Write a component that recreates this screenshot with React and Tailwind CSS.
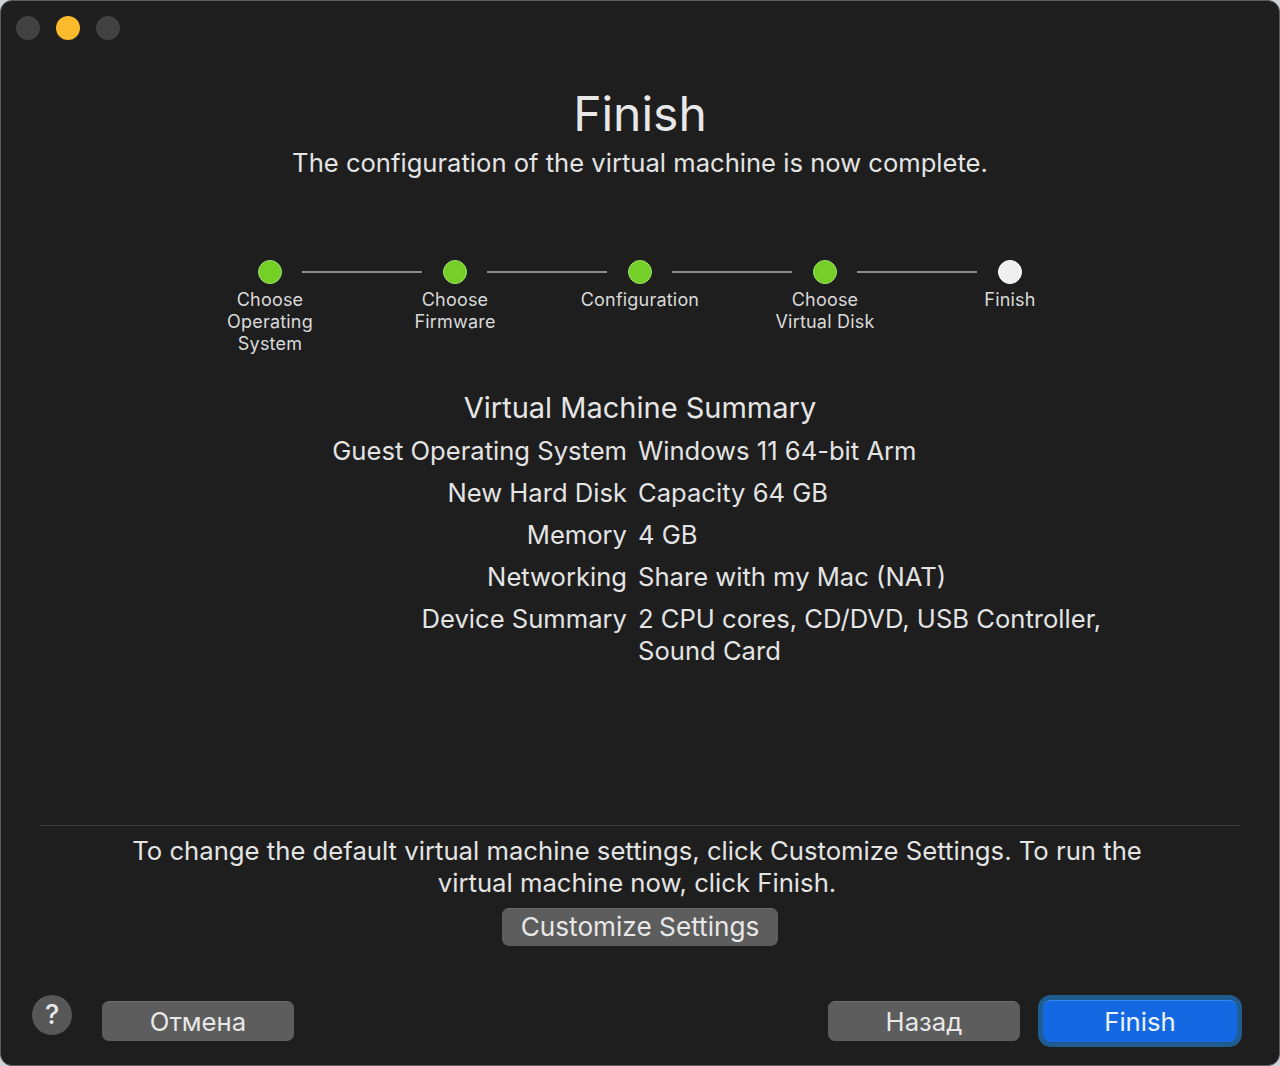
import React from 'react';

const steps = [
  { label: ['Choose', 'Operating', 'System'], done: true },
  { label: ['Choose', 'Firmware'], done: true },
  { label: ['Configuration'], done: true },
  { label: ['Choose', 'Virtual Disk'], done: true },
  { label: ['Finish'], done: false },
];

const summary = [
  ['Guest Operating System', 'Windows 11 64-bit Arm'],
  ['New Hard Disk', 'Capacity 64 GB'],
  ['Memory', '4 GB'],
  ['Networking', 'Share with my Mac (NAT)'],
  ['Device Summary', '2 CPU cores, CD/DVD, USB Controller, Sound Card'],
];

function Stepper() {
  return (
    <div className="flex flex-col items-center">
      <div className="flex items-center">
        {steps.map((step, i) => (
          <React.Fragment key={i}>
            <div
              className={
                step.done
                  ? 'w-6 h-6 rounded-full bg-[#74cf27] border border-[#a2dd72]'
                  : 'w-6 h-6 rounded-full bg-[#efefef] border border-[#ffffff]'
              }
            />
            {i < steps.length - 1 && (
              <div className="ml-5 mr-[21px] w-[120px] h-[2px] bg-[#8a8a8a]" />
            )}
          </React.Fragment>
        ))}
      </div>
      <div className="flex mt-[5px]">
        {steps.map((step, i) => (
          <div
            key={i}
            className="w-[185px] text-center text-[18px] leading-[22px] text-[#dadada] tracking-[0.2px]"
          >
            {step.label.map((line) => (
              <div key={line}>{line}</div>
            ))}
          </div>
        ))}
      </div>
    </div>
  );
}

function GrayButton({ children, className = '' }) {
  return (
    <button
      className={`h-10 rounded-[7px] bg-[#5d5d5d] border-t border-[#6a6a6a] text-[25.7px] text-[#e8e8e8] leading-none ${className}`}
    >
      {children}
    </button>
  );
}

export default function App() {
  return (
    <div className="w-[1280px] h-[1066px] bg-[#cfd3d8] font-['Inter','Liberation_Sans',sans-serif]">
      <div className="relative w-full h-full rounded-[12px] bg-[#1e1e1e] border border-[#5a5a5a] flex flex-col overflow-hidden">
        {/* traffic lights */}
        <div className="absolute top-[15px] left-[15px] flex gap-4">
          <div className="w-6 h-6 rounded-full bg-[#424242]" />
          <div className="w-6 h-6 rounded-full bg-[#fcbb2d]" />
          <div className="w-6 h-6 rounded-full bg-[#424242]" />
        </div>

        <h1 className="mt-[87px] text-center text-[48px] leading-[52px] text-[#e8e8e8]">
          Finish
        </h1>
        <p className="mt-[8px] text-center text-[25.6px] leading-[30px] text-[#e4e4e4]">
          The configuration of the virtual machine is now complete.
        </p>

        <div className="mt-[82px]">
          <Stepper />
        </div>

        <h2 className="mt-[36px] text-center text-[29px] leading-[34px] text-[#e6e6e6]">
          Virtual Machine Summary
        </h2>
        <div className="mt-[10px] grid grid-cols-[626px_482px] gap-x-[11px] gap-y-[10px] text-[25.6px] leading-[32px] text-[#e4e4e4]">
          {summary.map(([k, v]) => (
            <React.Fragment key={k}>
              <div className="text-right">{k}</div>
              <div>{v}</div>
            </React.Fragment>
          ))}
        </div>

        <div className="mt-auto mx-10 h-px bg-[#3c3c3c]" />
        <p className="mt-[9px] mx-auto w-[1030px] text-center text-[25.7px] leading-[32px] text-[#e4e4e4] -translate-x-[3px]">
          To change the default virtual machine settings, click Customize Settings. To run the
          virtual machine now, click Finish.
        </p>
        <div className="mt-[9px] flex justify-center">
          <GrayButton className="w-[276px] h-[38px] text-[26.2px]">Customize Settings</GrayButton>
        </div>

        <div className="mt-[54px] mb-[23px] flex items-center pl-[31px] pr-[42px]">
          <div className="w-10 h-10 rounded-full bg-[#575757] flex items-center justify-center text-[27px] font-medium text-[#e8e8e8] -mt-3">
            ?
          </div>
          <GrayButton className="ml-[30px] w-[192px]">Отмена</GrayButton>
          <div className="flex-1" />
          <GrayButton className="w-[192px]">Назад</GrayButton>
          <button className="ml-[23px] w-[194px] h-[42px] rounded-[8px] bg-[#1469e3] border-t border-[#3b86ee] shadow-[0_0_0_5px_#1f5c91] text-[25.7px] text-[#eef4ff] leading-none">
            Finish
          </button>
        </div>
      </div>
    </div>
  );
}
